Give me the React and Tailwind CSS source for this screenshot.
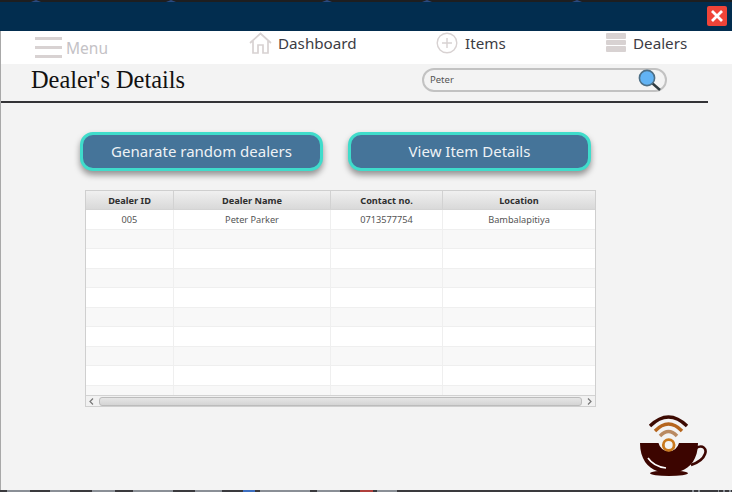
import React from "react";

const sans = "font-['Noto_Sans','Open_Sans',sans-serif]";
const rows = Array.from({ length: 10 });
const cols = ["w-[88px]", "w-[157px]", "w-[112px]", "flex-1"];
const heads = ["Dealer ID", "Dealer Name", "Contact no.", "Location"];
const first = ["005", "Peter Parker", "0713577754", "Bambalapitiya"];
const bits = [
  [7, 23, "#8a8f96"], [50, 20, "#8a8f96"], [92, 23, "#8a8f96"], [133, 40, "#8a8f96"], [195, 27, "#8a8f96"],
  [243, 12, "#3d6fc0"], [260, 50, "#8a8f96"], [317, 23, "#8a8f96"], [360, 13, "#b0403c"], [377, 20, "#8a8f96"],
  [692, 2, "#8a8f96"], [698, 2, "#8a8f96"], [718, 1, "#8a8f96"], [723, 2, "#8a8f96"], [729, 2, "#8a8f96"],
];

function Bump({ className = "" }) {
  return <span className={`block w-0 h-0 border-x-[5px] border-x-transparent border-b-[2px] border-b-[#2b4a80] ${className}`} />;
}

function Logo() {
  return (
    <svg width="68" height="62" viewBox="0 0 68 62">
      <path d="M10 11 Q28.5 -7 47 11" fill="none" stroke="#3c0a02" strokeWidth="3.4" />
      <path d="M15 16 Q28.5 2 42 16" fill="none" stroke="#b5651d" strokeWidth="3.4" />
      <path d="M20 21 Q28.5 12 37 21" fill="none" stroke="#b98a62" strokeWidth="3.4" />
      <path d="M0 28 H18.5 A10.5 10.5 0 0 0 39 28 H58 C58 44 50 53 41 56 H17 C8 53 0 44 0 28 Z" fill="#3c0500" />
      <path d="M56 33 C63 29 67 34 65 39 C63 45 57 48 51 50" fill="none" stroke="#3c0500" strokeWidth="2.6" />
      <ellipse cx="29" cy="58.3" rx="19" ry="2.8" fill="#3c0500" />
      <circle cx="28.7" cy="30" r="5.4" fill="none" stroke="#c9791d" strokeWidth="2.8" />
      <path d="M8 43 C12 49 18 52 26 53" fill="none" stroke="#fff" strokeWidth="1.6" />
    </svg>
  );
}

export default function App() {
  return (
    <div className={`w-[732px] h-[492px] flex flex-col overflow-hidden bg-[#f3f3f3] ${sans}`}>
      <div className="h-[2px] bg-[#1e1e20] flex shrink-0 items-end pl-[31px]">
        <Bump />
        <Bump className="ml-[125px]" />
        <Bump className="ml-[146px]" />
        <Bump className="ml-[90px]" />
        <Bump className="ml-[140px]" />
      </div>
      <div className="h-[29px] shrink-0 bg-[#022d4f] flex justify-end items-start pt-[4px] pr-[5px]">
        <div className="w-[20px] h-[20px] rounded-[2px] bg-[#f04438] flex items-center justify-center">
          <svg width="14" height="14" viewBox="0 0 14 14"><path d="M2 2L12 12M12 2L2 12" stroke="#fff" strokeWidth="2.8" /></svg>
        </div>
      </div>
      <div className="h-[33px] shrink-0 bg-white flex border-l border-[#a8a8a8]">
        <div className="w-[248px] flex items-end pl-[34px] pb-[6px] gap-[4px]">
          <div className="flex flex-col gap-[6px] w-[27px]">
            <span className="h-[3px] bg-[#d8d2d2]" /><span className="h-[3px] bg-[#d8d2d2]" /><span className="h-[3px] bg-[#d8d2d2]" />
          </div>
          <span className="text-[15.5px] leading-[18px] mb-[1px] text-[#c4c2c6]">Menu</span>
        </div>
        <div className="w-[187px] flex items-start pt-[1px] gap-[6px]">
          <svg width="23" height="22" viewBox="0 0 23 22" fill="none" stroke="#d8d2d2" strokeWidth="1.7">
            <path d="M1 11L11.5 1.5L22 11M4 9V21H9V13H14V21H19V9" />
          </svg>
          <span className="text-[15.2px] leading-[22px] text-[#3c3c44]">Dashboard</span>
        </div>
        <div className="w-[170px] flex items-start pt-[1px] gap-[6px]">
          <svg width="22" height="22" viewBox="0 0 22 22" fill="none" stroke="#d8d2d2">
            <circle cx="11" cy="11" r="9.8" strokeWidth="1.4" />
            <path d="M11 6V16M6 11H16" strokeWidth="1.4" />
          </svg>
          <span className="text-[15.2px] leading-[22px] text-[#3c3c44] ml-[1px]">Items</span>
        </div>
        <div className="flex items-start pt-[2px] gap-[7px]">
          <div className="flex flex-col gap-[1px] w-[20px]">
            <span className="h-[5.5px] rounded-[1px] bg-[#d8d2d2]" /><span className="h-[5.5px] rounded-[1px] bg-[#d8d2d2]" /><span className="h-[5.5px] rounded-[1px] bg-[#d8d2d2]" />
          </div>
          <span className="text-[15.2px] leading-[20px] text-[#3c3c44]">Dealers</span>
        </div>
      </div>
      <div className="flex-1 flex flex-col border-l border-[#a8a8a8] relative">
        <div className="h-[37px] w-[707px] shrink-0 border-b-2 border-[#333336] box-content flex items-start justify-between">
          <h1 className="ml-[30px] font-['Liberation_Serif',serif] text-[24.4px] leading-[32px] text-[#111] font-normal">Dealer's Details</h1>
          <div className="w-[245px] h-[24px] mt-[4px] mr-[41px] rounded-full border-2 border-[#c2c2c2] flex items-center justify-between pl-[6px] pr-[4px]">
            <span className="text-[9.5px] text-[#555]">Peter</span>
            <svg width="24" height="24" viewBox="0 0 24 24">
              <path d="M15 15L23 22" stroke="#2f3b40" strokeWidth="2.4" />
              <circle cx="10" cy="10" r="7.6" fill="#62b3f4" stroke="#4d6f86" strokeWidth="1.6" />
            </svg>
          </div>
        </div>
        <div className="flex gap-[25px] mt-[29px] ml-[79px] shrink-0">
          {["Genarate random dealers", "View Item Details"].map((t) => (
            <button key={t} className="w-[243px] h-[39px] rounded-[13px] border-[3px] border-[#3fdccb] bg-[#457499] text-[#eef2f5] text-[15px] shadow-[0_4px_6px_rgba(0,0,0,0.4)]">
              {t}
            </button>
          ))}
        </div>
        <div className="mt-[19px] ml-[84px] w-[511px] h-[217px] border border-[#cfcfcf] flex flex-col shrink-0 bg-white">
          <div className="h-[19px] shrink-0 flex bg-gradient-to-b from-[#f0f0f0] to-[#d9d9d9] border-b border-[#d4d4d4]">
            {heads.map((h, i) => (
              <div key={h} className={`${cols[i]} border-r border-[#d2d2d2] last:border-r-0 flex items-center justify-center pt-[1px] text-[9.2px] font-bold text-[#2e2e2e]`}>{h}</div>
            ))}
          </div>
          <div className="flex-1 overflow-hidden">
            {rows.map((_, r) => (
              <div key={r} className={`h-[19.5px] flex border-b border-[#efefef] ${r % 2 ? "bg-[#f8f8f8]" : "bg-white"}`}>
                {cols.map((c, i) => (
                  <div key={i} className={`${c} border-r border-[#efefef] last:border-r-0 flex items-center justify-center pt-[1px] text-[9.2px] text-[#555]`}>{r === 0 ? first[i] : ""}</div>
                ))}
              </div>
            ))}
          </div>
          <div className="h-[11px] shrink-0 bg-[#f1f1f1] border-t border-[#d2d2d2] flex items-center px-[3px] gap-[5px]">
            <svg width="5" height="7" viewBox="0 0 5 7" fill="none" stroke="#777" strokeWidth="1.2"><path d="M4 .5L1 3.5L4 6.5" /></svg>
            <div className="flex-1 h-[9px] rounded-[3px] border border-[#bcbcbc] bg-gradient-to-b from-[#e6e6e6] to-[#d4d4d4]" />
            <svg width="5" height="7" viewBox="0 0 5 7" fill="none" stroke="#777" strokeWidth="1.2"><path d="M1 .5L4 3.5L1 6.5" /></svg>
          </div>
        </div>
        <div className="absolute left-[639px] top-[351px]"><Logo /></div>
        <svg className="mt-auto block -ml-px" width="732" height="2" viewBox="0 0 732 2">
          <rect width="732" height="2" fill="#3a3a3e" />
          {bits.map(([x, w, c]) => <rect key={x} x={x} width={w} height="2" fill={c} />)}
        </svg>
      </div>
    </div>
  );
}
